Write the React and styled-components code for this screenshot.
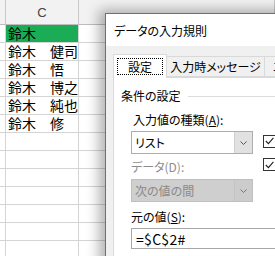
import React from 'react';
import styled, { createGlobalStyle } from 'styled-components';

const GlobalStyle = createGlobalStyle`
  html, body {
    margin: 0;
    padding: 0;
    background: #fff;
  }
  body {
    font-family: "Noto Sans CJK JP", "Noto Sans", sans-serif;
  }
`;

const Screen = styled.div`
  position: relative;
  width: 275px;
  height: 256px;
  overflow: hidden;
  background: #fff;
`;

const Sheet = styled.div`
  display: grid;
  grid-template-columns: 6px 73px 1fr;
  grid-template-rows: 25px;
  grid-auto-rows: 18px;
`;

const HeadCell = styled.div`
  display: flex;
  align-items: center;
  justify-content: center;
  background: #f2f2f2;
  border-right: 1px solid #c8c8c8;
  border-bottom: 1px solid #bdbdbd;
  font: 13px "Liberation Sans", Arial, sans-serif;
  color: #444;
`;

const Cell = styled.div`
  display: flex;
  align-items: center;
  border-right: 1px solid #d4d4d4;
  border-bottom: 1px solid #d4d4d4;
  background: ${(p) => p.$fill || '#fff'};
  padding-left: 2px;
  font-size: 14px;
  line-height: 17px;
  color: #000;
  white-space: nowrap;
`;

const Dialog = styled.div`
  position: absolute;
  left: 105px;
  top: 13px;
  width: 240px;
  height: 290px;
  display: flex;
  flex-direction: column;
  background: #f0f0f0;
  border: 1px solid #6f6f6f;
  box-shadow: -3px 0 12px 3px rgba(0, 0, 0, 0.3);
  font-size: 12px;
  font-feature-settings: 'palt';
  color: #000;
`;

const TitleBar = styled.div`
  height: 32px;
  display: flex;
  align-items: center;
  padding-left: 8px;
  background: #fff;
`;

const Body = styled.div`
  flex: 1;
  display: flex;
  flex-direction: column;
  padding: 8px 0 0 7px;
`;

const TabStrip = styled.div`
  display: flex;
  align-items: flex-end;
`;

const Tab = styled.div`
  position: relative;
  z-index: ${(p) => (p.$active ? 1 : 0)};
  flex-shrink: 0;
  width: ${(p) => p.$w || 'auto'};
  height: ${(p) => (p.$active ? '24px' : '21px')};
  margin-bottom: ${(p) => (p.$active ? '-1px' : '0')};
  padding: ${(p) => (p.$active ? '3px' : '0 8px')};
  box-sizing: border-box;
  display: flex;
  align-items: center;
  justify-content: center;
  background: ${(p) => (p.$active ? '#fff' : '#f0f0f0')};
  border: 1px solid #d9d9d9;
  border-bottom: ${(p) => (p.$active ? 'none' : '1px solid #d9d9d9')};
  border-left: ${(p) => (p.$first ? '1px solid #d9d9d9' : 'none')};
  white-space: nowrap;
`;

const Focus = styled.span`
  flex: 1;
  align-self: stretch;
  display: flex;
  align-items: center;
  justify-content: center;
  border: 1px dotted #000;
`;

const Panel = styled.div`
  flex: 1;
  background: #fff;
  border: 1px solid #d9d9d9;
  padding: 10px 0 0 7px;
`;

const GroupHead = styled.div`
  display: flex;
  align-items: center;
  line-height: 16px;
  &::after {
    content: '';
    flex: 1;
    height: 1px;
    margin-left: 7px;
    background: #dcdcdc;
  }
`;

const Fields = styled.div`
  display: grid;
  grid-template-columns: 122px 13px;
  column-gap: 10px;
  align-items: center;
  margin: 8px 0 0 10px;
`;

const Label = styled.div`
  grid-column: 1;
  line-height: 16px;
  padding-left: ${(p) => (p.$indent ? '2px' : '0')};
  margin-top: ${(p) => p.$mt || '0'};
  color: ${(p) => (p.$disabled ? '#8c8c8c' : '#000')};
`;

const U = styled.span`
  text-decoration: underline;
`;

const Combo = styled.div`
  grid-column: 1;
  height: 23px;
  margin-top: ${(p) => p.$mt || '0'};
  box-sizing: border-box;
  display: flex;
  background: ${(p) => (p.$disabled ? '#cfcfcf' : '#fff')};
  border: 1px solid ${(p) => (p.$disabled ? '#bfbfbf' : '#adadad')};
  color: ${(p) => (p.$disabled ? '#8a8a8a' : '#000')};
`;

const ComboText = styled.div`
  flex: 1;
  display: flex;
  align-items: center;
  padding-left: 3px;
`;

const ComboButton = styled.div`
  width: 17px;
  display: flex;
  align-items: center;
  justify-content: center;
  background: ${(p) => (p.$disabled ? '#cccccc' : '#e1e1e1')};
  border-left: 1px solid ${(p) => (p.$disabled ? '#c4c4c4' : '#d0d0d0')};
`;

const Check = styled.div`
  grid-column: 2;
  width: 13px;
  height: 13px;
  box-sizing: border-box;
  border: 1px solid #333;
  background: #fff;
  display: flex;
  align-items: center;
  justify-content: center;
`;

const Input = styled.div`
  grid-column: 1 / -1;
  width: 200px;
  height: 21px;
  margin-top: 3px;
  box-sizing: border-box;
  display: flex;
  align-items: center;
  padding-left: 4px;
  border: 1px solid #a8a8a8;
  background: #fff;
  font-size: 14px;
  letter-spacing: 0.3px;
`;

const Chevron = ({ color = '#555' }) => (
  <svg width="7" height="4" viewBox="0 0 7 4">
    <polyline points="0.5,0.5 3.5,3.5 6.5,0.5" fill="none" stroke={color} strokeWidth="1" />
  </svg>
);

const Tick = () => (
  <svg width="9" height="8" viewBox="0 0 9 8">
    <polyline points="0.8,4 3.4,6.6 8.4,0.8" fill="none" stroke="#222" strokeWidth="1.1" />
  </svg>
);

const names = ['鈴木', '鈴木　健司', '鈴木　悟', '鈴木　博之', '鈴木　純也', '鈴木　修'];

export default function App() {
  const rows = Array.from({ length: 13 }, (_, i) => names[i] || '');
  return (
    <Screen>
      <GlobalStyle />
      <Sheet>
        <HeadCell />
        <HeadCell>C</HeadCell>
        <HeadCell />
        {rows.map((name, i) => (
          <React.Fragment key={i}>
            <Cell />
            <Cell $fill={i === 0 ? '#1aad56' : undefined}>{name}</Cell>
            <Cell />
          </React.Fragment>
        ))}
      </Sheet>

      <Dialog>
        <TitleBar>データの入力規則</TitleBar>
        <Body>
          <TabStrip>
            <Tab $active $first $w="54px">
              <Focus>設定</Focus>
            </Tab>
            <Tab $w="98px">入力時メッセージ</Tab>
            <Tab>エラー メッセージ</Tab>
          </TabStrip>
          <Panel>
            <GroupHead>条件の設定</GroupHead>
            <Fields>
              <Label $indent>
                入力値の種類(<U>A</U>):
              </Label>
              <Combo $mt="3px">
                <ComboText>リスト</ComboText>
                <ComboButton>
                  <Chevron />
                </ComboButton>
              </Combo>
              <Check>
                <Tick />
              </Check>
              <Label $disabled $mt="5px">
                データ(D):
              </Label>
              <Check>
                <Tick />
              </Check>
              <Combo $disabled $mt="4px">
                <ComboText>次の値の間</ComboText>
                <ComboButton $disabled>
                  <Chevron color="#777" />
                </ComboButton>
              </Combo>
              <Label $mt="7px">
                元の値(<U>S</U>):
              </Label>
              <Input>=$C$2#</Input>
            </Fields>
          </Panel>
        </Body>
      </Dialog>
    </Screen>
  );
}
